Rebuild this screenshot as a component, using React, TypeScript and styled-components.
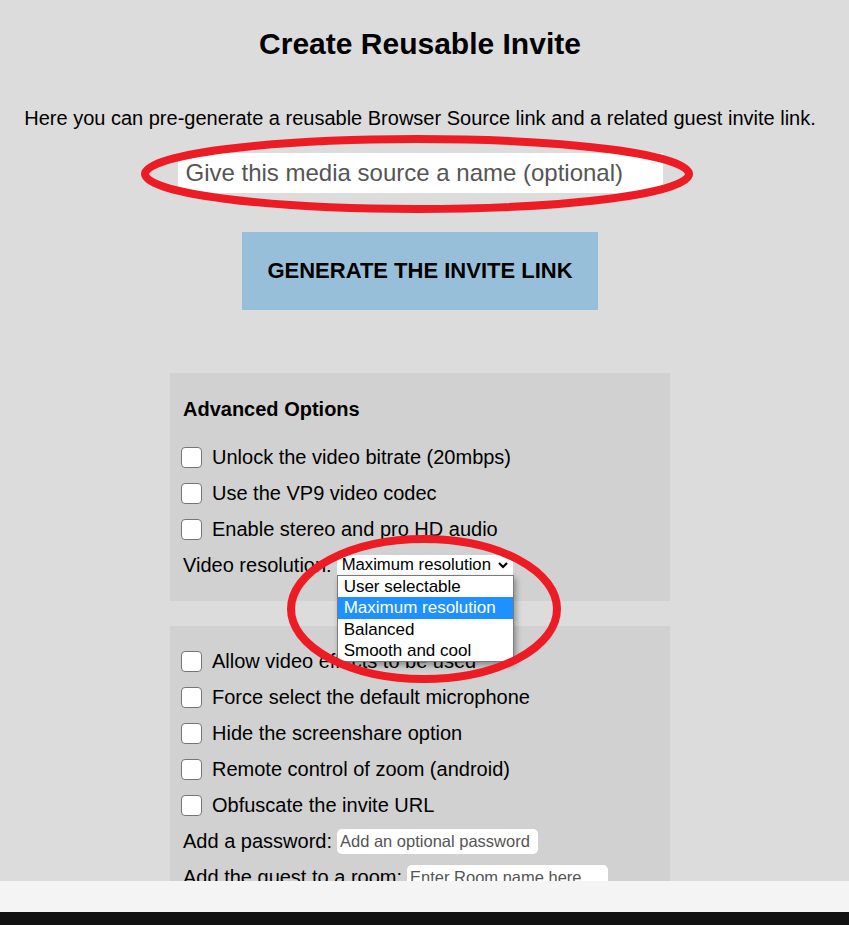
import React from "react";
import styled, { createGlobalStyle } from "styled-components";

const Global = createGlobalStyle`
  html, body { margin: 0; padding: 0; }
  body {
    background: #dcdcdc;
    font-family: "Liberation Sans", Arial, sans-serif;
    color: #000;
    overflow: hidden;
  }
`;

const Screen = styled.div`
  width: 849px;
  height: 925px;
  display: flex;
  flex-direction: column;
  overflow: hidden;
`;

const Viewport = styled.div`
  position: relative;
  flex: 1;
  overflow: hidden;
  background: #dcdcdc;
`;

const Page = styled.main`
  width: 840px;
  display: flex;
  flex-direction: column;
  align-items: center;
  padding-top: 27px;
`;

const Title = styled.h1`
  margin: 0;
  font-size: 30px;
  line-height: 34px;
  font-weight: bold;
`;

const Lead = styled.p`
  margin: 45px 0 0;
  font-size: 20px;
  line-height: 24px;
  white-space: nowrap;
`;

const NameInput = styled.input`
  margin-top: 23px;
  width: 485px;
  height: 40px;
  box-sizing: border-box;
  border: none;
  outline: none;
  background: #fff;
  padding: 0 8px;
  font-family: inherit;
  font-size: 24px;
  &::placeholder { color: #555; }
`;

const GenerateButton = styled.button`
  margin-top: 39px;
  width: 356px;
  height: 78px;
  border: none;
  background: #98bfd9;
  font-family: inherit;
  font-weight: bold;
  font-size: 22px;
  color: #000;
`;

const Panel = styled.section<{ $top: number; $pt: number; $pb: number }>`
  margin-top: ${(p) => p.$top}px;
  width: 500px;
  box-sizing: border-box;
  background: #d1d1d1;
  padding: ${(p) => p.$pt}px 12px ${(p) => p.$pb}px 11px;
  display: flex;
  flex-direction: column;
  align-self: center;
  position: relative;
`;

const PanelHeading = styled.h2`
  margin: 0 0 19px 2px;
  font-size: 20px;
  line-height: 22px;
  font-weight: bold;
`;

const Row = styled.label`
  height: 36px;
  display: flex;
  align-items: center;
  gap: 10px;
  font-size: 20px;
  white-space: nowrap;
`;

const Box = styled.input.attrs({ type: "checkbox" })`
  appearance: none;
  margin: 0;
  width: 21px;
  height: 21px;
  box-sizing: border-box;
  background: #fff;
  border: 1px solid #767676;
  border-radius: 4px;
  flex: none;
`;

const FieldRow = styled.div`
  height: 36px;
  display: flex;
  align-items: center;
  gap: 5px;
  padding-left: 2px;
  font-size: 20px;
  white-space: nowrap;
  position: relative;
`;

const SelectBox = styled.div`
  position: relative;
  width: 176px;
  height: 20px;
  background: #fff;
  box-sizing: border-box;
  padding-left: 5px;
  display: flex;
  align-items: center;
  justify-content: space-between;
  font-size: 16.7px;
`;

const Chevron = styled.svg`
  width: 12px;
  height: 12px;
  margin-right: 4px;
`;

const Menu = styled.ul`
  position: absolute;
  top: 20px;
  left: 0;
  width: 177px;
  margin: 0;
  padding: 0;
  list-style: none;
  background: #fff;
  border: 1px solid #7a7a7a;
  box-sizing: border-box;
  box-shadow: 2px 3px 6px rgba(0, 0, 0, 0.35);
  z-index: 5;
`;

const Option = styled.li<{ $active?: boolean }>`
  height: 21.25px;
  line-height: 21px;
  padding-left: 6px;
  font-size: 17px;
  background: ${(p) => (p.$active ? "#1e90ff" : "#fff")};
  color: ${(p) => (p.$active ? "#fff" : "#000")};
`;

const TextField = styled.input`
  width: 201px;
  height: 25px;
  box-sizing: border-box;
  border: none;
  outline: none;
  border-radius: 5px;
  background: #fff;
  padding: 0 3px;
  font-family: inherit;
  font-size: 16.5px;
  &::placeholder { color: #555; }
`;

const Annotation = styled.svg`
  position: absolute;
  left: 0;
  top: 0;
  width: 849px;
  height: 881px;
  pointer-events: none;
  z-index: 10;
`;

const StatusBar = styled.div`
  height: 31px;
  background: #f4f4f4;
  flex: none;
`;

const BlackBar = styled.div`
  height: 13px;
  background: #111;
  flex: none;
`;

const firstOptions = [
  "Unlock the video bitrate (20mbps)",
  "Use the VP9 video codec",
  "Enable stereo and pro HD audio",
];

const secondOptions = [
  "Allow video effects to be used",
  "Force select the default microphone",
  "Hide the screenshare option",
  "Remote control of zoom (android)",
  "Obfuscate the invite URL",
];

export default function App() {
  return (
    <Screen>
      <Global />
      <Viewport>
        <Page>
          <Title>Create Reusable Invite</Title>
          <Lead>
            Here you can pre-generate a reusable Browser Source link and a related guest invite link.
          </Lead>
          <NameInput placeholder="Give this media source a name (optional)" />
          <GenerateButton>GENERATE THE INVITE LINK</GenerateButton>

          <Panel $top={63} $pt={25} $pb={18}>
            <PanelHeading>Advanced Options</PanelHeading>
            {firstOptions.map((t) => (
              <Row key={t}>
                <Box />
                {t}
              </Row>
            ))}
            <FieldRow>
              Video resolution:
              <SelectBox>
                Maximum resolution
                <Chevron viewBox="0 0 12 12">
                  <path d="M2 4l4 4 4-4" fill="none" stroke="#000" strokeWidth="2.2" />
                </Chevron>
                <Menu>
                  <Option>User selectable</Option>
                  <Option $active>Maximum resolution</Option>
                  <Option>Balanced</Option>
                  <Option>Smooth and cool</Option>
                </Menu>
              </SelectBox>
            </FieldRow>
          </Panel>

          <Panel $top={25} $pt={17} $pb={20}>
            {secondOptions.map((t) => (
              <Row key={t}>
                <Box />
                {t}
              </Row>
            ))}
            <FieldRow>
              Add a password:
              <TextField placeholder="Add an optional password" />
            </FieldRow>
            <FieldRow>
              Add the guest to a room:
              <TextField placeholder="Enter Room name here" />
            </FieldRow>
          </Panel>
        </Page>
        <Annotation viewBox="0 0 849 881">
          <ellipse cx="417" cy="174" rx="272" ry="35" fill="none" stroke="#ed1c24" strokeWidth="8" />
          <ellipse cx="424" cy="609" rx="133" ry="70" fill="none" stroke="#ed1c24" strokeWidth="8" />
        </Annotation>
      </Viewport>
      <StatusBar />
      <BlackBar />
    </Screen>
  );
}
